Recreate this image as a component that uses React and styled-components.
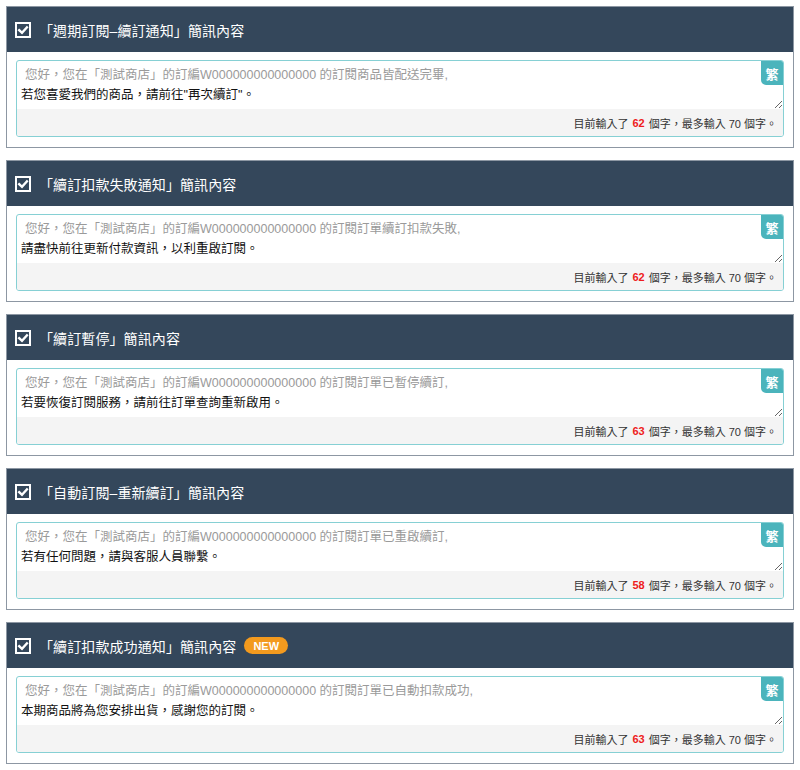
import React from "react";
import styled, { createGlobalStyle } from "styled-components";

const Global = createGlobalStyle`
  html, body { margin: 0; padding: 0; background: #fff; }
  body { font-family: "Liberation Sans", "Noto Sans CJK TC", sans-serif; }
`;

const Page = styled.div`
  display: flex;
  flex-direction: column;
  gap: 12px;
  padding: 6px;
`;

const Panel = styled.section`
  border: 1px solid #8d97a3;
  background: #fff;
`;

const Header = styled.header`
  height: 45px;
  background: #34475b;
  display: flex;
  align-items: center;
  gap: 8px;
  padding-left: 8px;
  color: #fff;
`;

const Title = styled.h3`
  margin: 0;
  font-size: 14px;
  font-weight: 400;
  letter-spacing: 0.1px;
`;

const NewBadge = styled.span`
  display: inline-flex;
  align-items: center;
  justify-content: center;
  height: 17px;
  padding: 0 9px;
  border-radius: 9px;
  background: #f39a1e;
  color: #fff;
  font-size: 11px;
  font-weight: 700;
`;

const Body = styled.div`
  padding: 8px 9px 10px;
`;

const Editor = styled.div`
  position: relative;
  border: 1px solid #86d0d4;
  border-radius: 3px;
  overflow: hidden;
`;

const LangTag = styled.span`
  position: absolute;
  top: 0;
  right: 0;
  width: 22px;
  height: 24px;
  display: flex;
  align-items: center;
  justify-content: center;
  background: #4bb4bc;
  color: #fff;
  font-size: 13px;
  font-weight: 700;
  border-bottom-left-radius: 5px;
`;

const Prefix = styled.div`
  padding: 4px 8px 0;
  color: #9a9a9a;
  font-size: 12.5px;
  line-height: 20px;
`;

const Field = styled.textarea`
  display: block;
  width: 100%;
  box-sizing: border-box;
  height: 24px;
  margin: 0;
  padding: 0 4px;
  border: none;
  outline: none;
  resize: vertical;
  color: #111;
  font-family: inherit;
  font-size: 12.5px;
  line-height: 20px;
  overflow: hidden;
`;

const Counter = styled.div`
  height: 27px;
  background: #f4f4f4;
  display: flex;
  align-items: center;
  justify-content: flex-end;
  padding-right: 6px;
  color: #333;
  font-size: 11px;
`;

const Count = styled.b`
  color: #ee1c1c;
  margin: 0 4px;
`;

const Check = () => (
  <svg width="16" height="16" viewBox="0 0 16 16" aria-hidden="true">
    <rect x="1" y="1" width="14" height="14" fill="none" stroke="#fff" strokeWidth="2" />
    <path d="M4.2 8.2 L7 10.8 L11.9 5.4" fill="none" stroke="#fff" strokeWidth="2.4" strokeLinecap="square" />
  </svg>
);

const LEAD = "您好，您在「測試商店」的訂編W000000000000000 的訂閱";

const notices = [
  { title: "「週期訂閱–續訂通知」簡訊內容", tail: "商品皆配送完畢,", text: "若您喜愛我們的商品，請前往\"再次續訂\"。", count: 62 },
  { title: "「續訂扣款失敗通知」簡訊內容", tail: "訂單續訂扣款失敗,", text: "請盡快前往更新付款資訊，以利重啟訂閱。", count: 62 },
  { title: "「續訂暫停」簡訊內容", tail: "訂單已暫停續訂,", text: "若要恢復訂閱服務，請前往訂單查詢重新啟用。", count: 63 },
  { title: "「自動訂閱–重新續訂」簡訊內容", tail: "訂單已重啟續訂,", text: "若有任何問題，請與客服人員聯繫。", count: 58 },
  { title: "「續訂扣款成功通知」簡訊內容", tail: "訂單已自動扣款成功,", text: "本期商品將為您安排出貨，感謝您的訂閱。", count: 63, isNew: true },
];

export default function App() {
  return (
    <>
      <Global />
      <Page>
        {notices.map((n) => (
          <Panel key={n.title}>
            <Header>
              <Check />
              <Title>{n.title}</Title>
              {n.isNew && <NewBadge>NEW</NewBadge>}
            </Header>
            <Body>
              <Editor>
                <LangTag>繁</LangTag>
                <Prefix>{LEAD + n.tail}</Prefix>
                <Field defaultValue={n.text} />
                <Counter>
                  目前輸入了<Count>{n.count}</Count>個字，最多輸入 70 個字。
                </Counter>
              </Editor>
            </Body>
          </Panel>
        ))}
      </Page>
    </>
  );
}
